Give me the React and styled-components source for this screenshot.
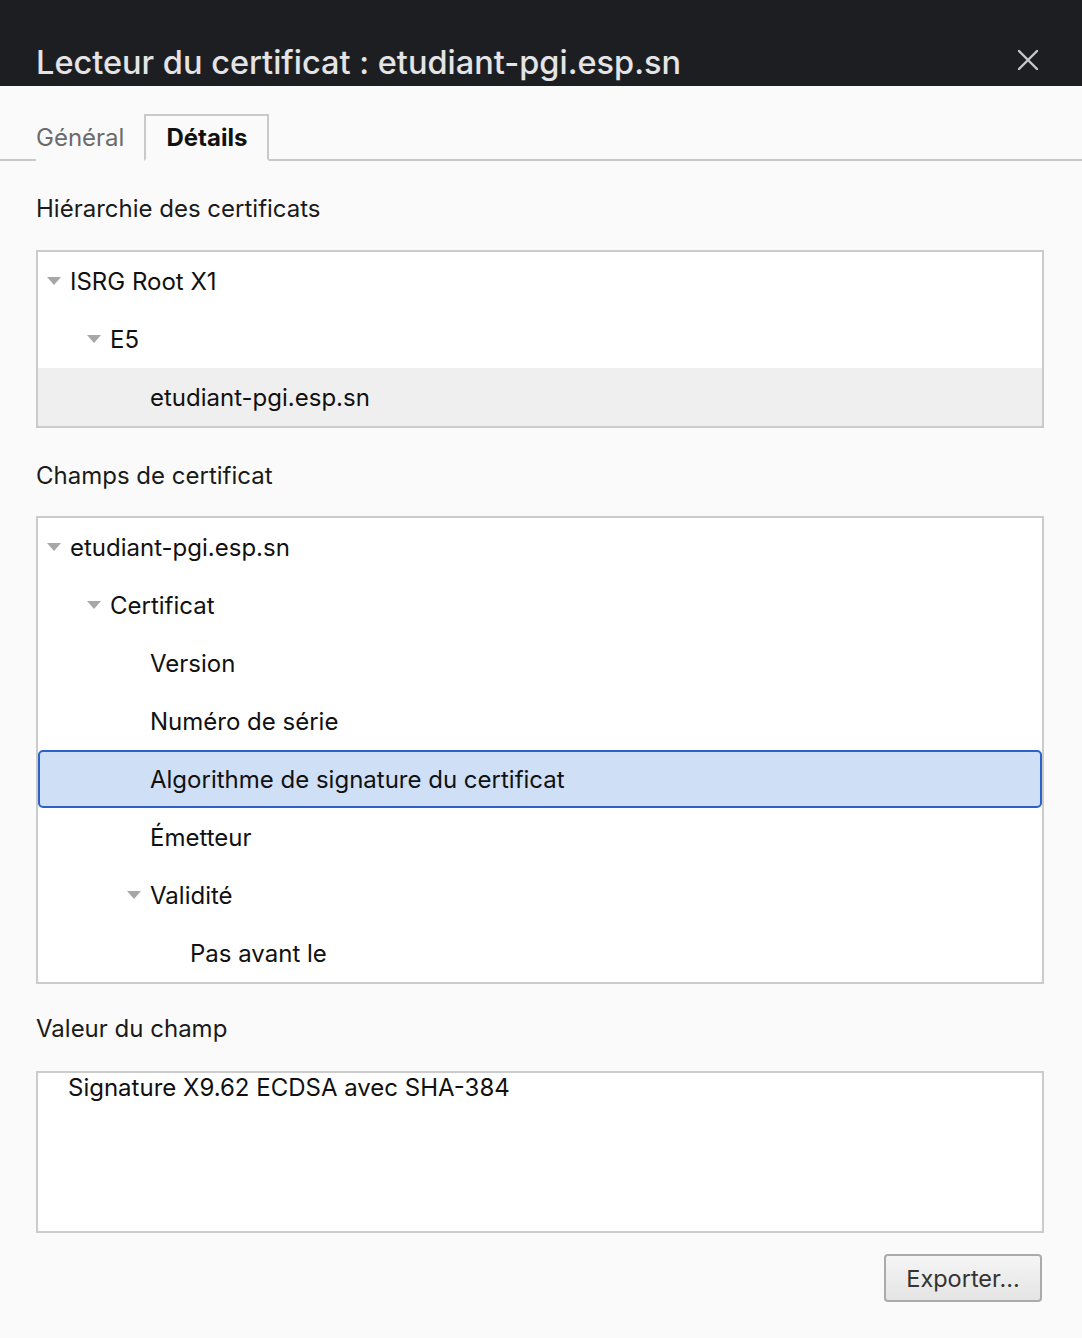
import React from 'react';
import styled, {createGlobalStyle} from 'styled-components';

const GlobalStyle = createGlobalStyle`
    body {
        margin: 0;
        background: #fafafa;
        font-family: Inter, "Noto Sans", sans-serif;
    }
`

const Window = styled.div`
    width: 1082px;
    height: 1338px;
    background: #fafafa;
    display: flex;
    flex-direction: column;
    overflow: hidden;
`

const TitleBar = styled.div`
    height: 86px;
    background: #1d1e22;
    display: flex;
    align-items: flex-end;
    justify-content: space-between;
    padding: 0 36px 1px 36px;
    box-sizing: border-box;
`

const Title = styled.div`
    color: #e4e4e6;
    font-size: 32.5px;
    font-weight: 500;
    line-height: 44px;
`

const CloseButton = styled.div`
    width: 22px;
    height: 22px;
    margin-bottom: 14px;
    margin-right: 7px;
    svg {
        display: block;
    }
`

const TabBar = styled.div`
    display: flex;
    align-items: flex-end;
    height: 75px;
    border-bottom: 2px solid #c9c9c9;
    padding-left: 36px;
    box-sizing: border-box;
`

const Tab = styled.div`
    height: 47px;
    box-sizing: border-box;
    display: flex;
    align-items: center;
    font-size: 24px;
    margin-bottom: -2px;
    color: ${props => props.active ? '#111' : '#6b6b6b'};
    font-weight: ${props => props.active ? 700 : 400};
    padding: ${props => props.active ? '0 20px 0 20px' : '0 20px 0 0'};
    border: ${props => props.active ? '2px solid #c9c9c9' : 'none'};
    border-bottom: ${props => props.active ? '2px solid #fafafa' : 'none'};
    background: #fafafa;
`

const Content = styled.div`
    padding: 0 38px 0 36px;
    display: flex;
    flex-direction: column;
`

const SectionLabel = styled.div`
    font-size: 24px;
    color: #1a1a1a;
    height: ${props => props.h}px;
    padding-top: ${props => props.shift}px;
    box-sizing: border-box;
    display: flex;
    align-items: center;
`

const TreeBox = styled.div`
    background: #fff;
    border: 2px solid #cbcbcb;
    display: flex;
    flex-direction: column;
`

const Row = styled.div`
    height: 58px;
    box-sizing: border-box;
    display: flex;
    align-items: center;
    padding-left: ${props => (props.selected ? 6 : 8) + props.level * 40}px;
    font-size: 24px;
    color: #111;
    background: ${props => props.selected ? '#cfdff6' : props.muted ? '#efefef' : 'transparent'};
    border: ${props => props.selected ? '2px solid #2b62c8' : '2px solid transparent'};
    border-radius: ${props => props.selected ? '5px' : '0'};
    border-left-width: ${props => props.selected ? '2px' : '0'};
    border-right-width: ${props => props.selected ? '2px' : '0'};
`

const Twisty = styled.span`
    width: 24px;
    flex: 0 0 24px;
    display: flex;
    align-items: center;
    svg {
        display: block;
    }
`

const Spacer = styled.span`
    width: 24px;
    flex: 0 0 24px;
`

const ValueBox = styled.div`
    background: #fff;
    border: 2px solid #cbcbcb;
    height: 162px;
    box-sizing: border-box;
    padding: 1px 30px;
    font-size: 24px;
    color: #111;
    line-height: 28px;
`

const Footer = styled.div`
    display: flex;
    justify-content: flex-end;
    padding-top: 21px;
`

const ExportButton = styled.button`
    width: 158px;
    height: 48px;
    border: 2px solid #ababab;
    border-radius: 4px;
    background: linear-gradient(#f5f5f5, #e4e4e4);
    font-family: Inter, "Noto Sans", sans-serif;
    font-size: 23.5px;
    color: #333;
    margin-right: 2px;
    padding: 0;
`

const Triangle = () => (
    <svg width="16" height="10" viewBox="0 0 16 10">
        <path d="M1 1 L15 1 L8 9 Z" fill="#a7a7a7"/>
    </svg>
)

const TreeRow = ({level, open, selected, muted, children}) => (
    <Row level={level} selected={selected} muted={muted}>
        {open ? <Twisty><Triangle/></Twisty> : <Spacer/>}
        {children}
    </Row>
)

const hierarchy = [
    {label: 'ISRG Root X1', level: 0, open: true},
    {label: 'E5', level: 1, open: true},
    {label: 'etudiant-pgi.esp.sn', level: 2, muted: true},
]

const fields = [
    {label: 'etudiant-pgi.esp.sn', level: 0, open: true},
    {label: 'Certificat', level: 1, open: true},
    {label: 'Version', level: 2},
    {label: 'Numéro de série', level: 2},
    {label: 'Algorithme de signature du certificat', level: 2, selected: true},
    {label: 'Émetteur', level: 2},
    {label: 'Validité', level: 2, open: true},
    {label: 'Pas avant le', level: 3},
]

const App = () => {
    return (
        <Window>
            <GlobalStyle/>
            <TitleBar>
                <Title>Lecteur du certificat : etudiant-pgi.esp.sn</Title>
                <CloseButton>
                    <svg width="22" height="22" viewBox="0 0 22 22">
                        <path d="M2 2 L20 20 M20 2 L2 20" stroke="#c9c9cc" strokeWidth="2.4" strokeLinecap="round"/>
                    </svg>
                </CloseButton>
            </TitleBar>
            <TabBar>
                <Tab>Général</Tab>
                <Tab active>Détails</Tab>
            </TabBar>
            <Content>
                <SectionLabel h={89} shift={6}>Hiérarchie des certificats</SectionLabel>
                <TreeBox>
                    {hierarchy.map((r, i) => (
                        <TreeRow key={i} level={r.level} open={r.open} muted={r.muted}>{r.label}</TreeRow>
                    ))}
                </TreeBox>
                <SectionLabel h={88} shift={6}>Champs de certificat</SectionLabel>
                <TreeBox>
                    {fields.map((r, i) => (
                        <TreeRow key={i} level={r.level} open={r.open} selected={r.selected}>{r.label}</TreeRow>
                    ))}
                </TreeBox>
                <SectionLabel h={87} shift={2}>Valeur du champ</SectionLabel>
                <ValueBox>Signature X9.62 ECDSA avec SHA-384</ValueBox>
                <Footer>
                    <ExportButton>Exporter...</ExportButton>
                </Footer>
            </Content>
        </Window>
    )
}

export default App;
